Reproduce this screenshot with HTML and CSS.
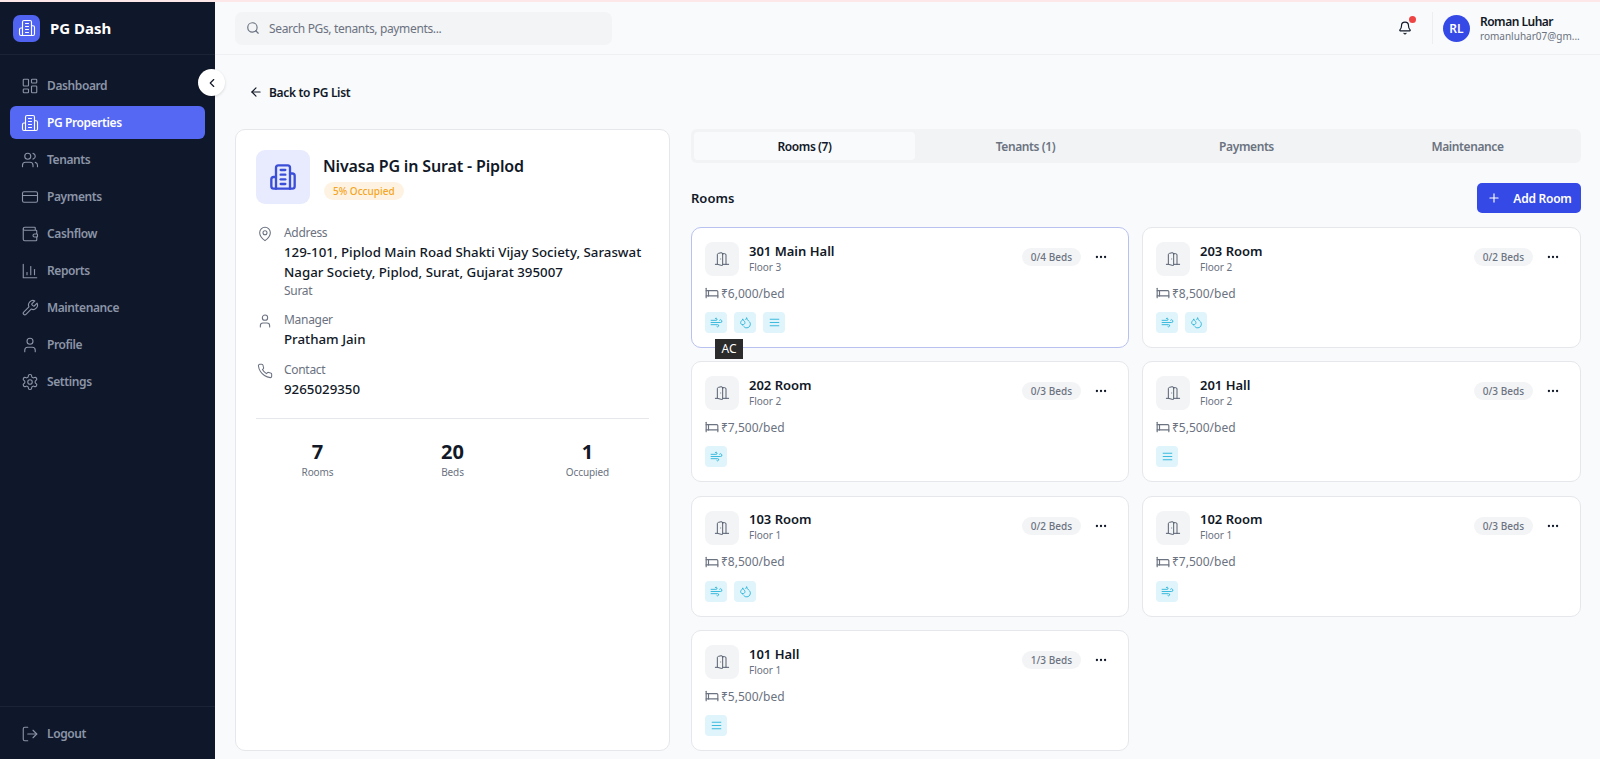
FILE: index.html
```html
<!DOCTYPE html>
<html lang="en">
<head>
    <meta charset="UTF-8">
    <meta name="viewport" content="width=device-width, initial-scale=1.0">
    <title>PG Dash</title>
    <link rel="stylesheet" href="styles.css">
</head>
<body>
    <svg class="sprite" xmlns="http://www.w3.org/2000/svg">
        <symbol id="i-building" viewBox="0 0 24 24"><path d="M6 22V4a2 2 0 0 1 2-2h8a2 2 0 0 1 2 2v18Z"/><path d="M6 12H4a2 2 0 0 0-2 2v6a2 2 0 0 0 2 2h2"/><path d="M18 9h2a2 2 0 0 1 2 2v9a2 2 0 0 1-2 2h-2"/><path d="M10 6h4"/><path d="M10 10h4"/><path d="M10 14h4"/><path d="M10 18h4"/></symbol>
        <symbol id="i-dashboard" viewBox="0 0 24 24"><rect x="3" y="3" width="7" height="9" rx="1"/><rect x="14" y="3" width="7" height="5" rx="1"/><rect x="14" y="12" width="7" height="9" rx="1"/><rect x="3" y="16" width="7" height="5" rx="1"/></symbol>
        <symbol id="i-users" viewBox="0 0 24 24"><path d="M16 21v-2a4 4 0 0 0-4-4H6a4 4 0 0 0-4 4v2"/><circle cx="9" cy="7" r="4"/><path d="M22 21v-2a4 4 0 0 0-3-3.87"/><path d="M16 3.13a4 4 0 0 1 0 7.75"/></symbol>
        <symbol id="i-card" viewBox="0 0 24 24"><rect x="2" y="5" width="20" height="14" rx="2"/><path d="M2 10h20"/></symbol>
        <symbol id="i-wallet" viewBox="0 0 24 24"><path d="M19 7V4a1 1 0 0 0-1-1H5a2 2 0 0 0 0 4h15a1 1 0 0 1 1 1v4h-3a2 2 0 0 0 0 4h3a1 1 0 0 0 1-1v-2a1 1 0 0 0-1-1"/><path d="M3 5v14a2 2 0 0 0 2 2h15a1 1 0 0 0 1-1v-4"/></symbol>
        <symbol id="i-chart" viewBox="0 0 24 24"><path d="M3 3v18h18"/><path d="M18 17v-7"/><path d="M13 17V6"/><path d="M8 17v-3"/></symbol>
        <symbol id="i-wrench" viewBox="0 0 24 24"><path d="M14.7 6.3a1 1 0 0 0 0 1.4l1.6 1.6a1 1 0 0 0 1.4 0l3.77-3.77a6 6 0 0 1-7.94 7.94l-6.91 6.91a2.12 2.12 0 0 1-3-3l6.91-6.91a6 6 0 0 1 7.94-7.94l-3.76 3.76z"/></symbol>
        <symbol id="i-user" viewBox="0 0 24 24"><path d="M19 21v-2a4 4 0 0 0-4-4H9a4 4 0 0 0-4 4v2"/><circle cx="12" cy="7" r="4"/></symbol>
        <symbol id="i-settings" viewBox="0 0 24 24"><path d="M12.22 2h-.44a2 2 0 0 0-2 2v.18a2 2 0 0 1-1 1.73l-.43.25a2 2 0 0 1-2 0l-.15-.08a2 2 0 0 0-2.73.73l-.22.38a2 2 0 0 0 .73 2.73l.15.1a2 2 0 0 1 1 1.72v.51a2 2 0 0 1-1 1.74l-.15.09a2 2 0 0 0-.73 2.73l.22.38a2 2 0 0 0 2.73.73l.15-.08a2 2 0 0 1 2 0l.43.25a2 2 0 0 1 1 1.73V20a2 2 0 0 0 2 2h.44a2 2 0 0 0 2-2v-.18a2 2 0 0 1 1-1.73l.43-.25a2 2 0 0 1 2 0l.15.08a2 2 0 0 0 2.73-.73l.22-.39a2 2 0 0 0-.73-2.73l-.15-.08a2 2 0 0 1-1-1.74v-.5a2 2 0 0 1 1-1.74l.15-.09a2 2 0 0 0 .73-2.73l-.22-.38a2 2 0 0 0-2.73-.73l-.15.08a2 2 0 0 1-2 0l-.43-.25a2 2 0 0 1-1-1.73V4a2 2 0 0 0-2-2z"/><circle cx="12" cy="12" r="3"/></symbol>
        <symbol id="i-logout" viewBox="0 0 24 24"><path d="M9 21H5a2 2 0 0 1-2-2V5a2 2 0 0 1 2-2h4"/><path d="m16 17 5-5-5-5"/><path d="M21 12H9"/></symbol>
        <symbol id="i-chevron" viewBox="0 0 24 24"><path d="m15 18-6-6 6-6"/></symbol>
        <symbol id="i-search" viewBox="0 0 24 24"><circle cx="11" cy="11" r="8"/><path d="m21 21-4.3-4.3"/></symbol>
        <symbol id="i-bell" viewBox="0 0 24 24"><path d="M10.268 21a2 2 0 0 0 3.464 0"/><path d="M3.262 15.326A1 1 0 0 0 4 17h16a1 1 0 0 0 .74-1.673C19.41 13.956 18 12.499 18 8A6 6 0 0 0 6 8c0 4.499-1.411 5.956-2.738 7.326"/></symbol>
        <symbol id="i-arrow" viewBox="0 0 24 24"><path d="m12 19-7-7 7-7"/><path d="M19 12H5"/></symbol>
        <symbol id="i-pin" viewBox="0 0 24 24"><path d="M20 10c0 6-8 12-8 12s-8-6-8-12a8 8 0 0 1 16 0Z"/><circle cx="12" cy="10" r="3"/></symbol>
        <symbol id="i-phone" viewBox="0 0 24 24"><path d="M22 16.92v3a2 2 0 0 1-2.18 2 19.79 19.79 0 0 1-8.63-3.07 19.5 19.5 0 0 1-6-6 19.79 19.79 0 0 1-3.07-8.67A2 2 0 0 1 4.11 2h3a2 2 0 0 1 2 1.72 12.84 12.84 0 0 0 .7 2.81 2 2 0 0 1-.45 2.11L8.09 9.91a16 16 0 0 0 6 6l1.27-1.27a2 2 0 0 1 2.11-.45 12.84 12.84 0 0 0 2.81.7A2 2 0 0 1 22 16.92z"/></symbol>
        <symbol id="i-plus" viewBox="0 0 24 24"><path d="M5 12h14"/><path d="M12 5v14"/></symbol>
        <symbol id="i-door" viewBox="0 0 24 24"><path d="M13 4h3a2 2 0 0 1 2 2v14"/><path d="M2 20h3"/><path d="M13 20h9"/><path d="M10 12v.01"/><path d="M13 4.562v16.157a1 1 0 0 1-1.242.97L5 20V5.562a2 2 0 0 1 1.515-1.94l4-1A2 2 0 0 1 13 4.561Z"/></symbol>
        <symbol id="i-dots" viewBox="0 0 24 24"><circle cx="12" cy="12" r="1"/><circle cx="19" cy="12" r="1"/><circle cx="5" cy="12" r="1"/></symbol>
        <symbol id="i-bed" viewBox="0 0 24 24"><path d="M2 4v16"/><path d="M2 8h18a2 2 0 0 1 2 2v10"/><path d="M2 17h20"/><path d="M6 8v9"/></symbol>
        <symbol id="i-wind" viewBox="0 0 24 24"><path d="M17.7 7.7a2.5 2.5 0 1 1 1.8 4.3H2"/><path d="M9.6 4.6A2 2 0 1 1 11 8H2"/><path d="M12.6 19.4A2 2 0 1 0 14 16H2"/></symbol>
        <symbol id="i-drops" viewBox="0 0 24 24"><path d="M7 16.3c2.2 0 4-1.83 4-4.05 0-1.16-.57-2.26-1.71-3.19S7.29 6.75 7 5.3c-.29 1.45-1.14 2.84-2.29 3.76S3 11.1 3 12.25c0 2.22 1.8 4.05 4 4.05z"/><path d="M12.56 6.6A10.97 10.97 0 0 0 14 3.02c.5 2.5 2 4.9 4 6.5s3 3.5 3 5.5a6.98 6.98 0 0 1-11.91 4.97"/></symbol>
        <symbol id="i-lines" viewBox="0 0 24 24"><path d="M4 6h16"/><path d="M4 12h16"/><path d="M4 18h16"/></symbol>
    </svg>

    <div class="top-strip"></div>
    <div class="app">
        <aside class="sidebar">
            <div class="brand">
                <span class="brand-logo"><svg class="ic ic-18"><use href="#i-building"/></svg></span>
                <span class="brand-name">PG Dash</span>
            </div>
            <button type="button" class="collapse-btn"><svg class="ic ic-14"><use href="#i-chevron"/></svg></button>
            <nav class="nav">
                <a class="nav-item"><svg class="ic ic-18"><use href="#i-dashboard"/></svg>Dashboard</a>
                <a class="nav-item active"><svg class="ic ic-18"><use href="#i-building"/></svg>PG Properties</a>
                <a class="nav-item"><svg class="ic ic-18"><use href="#i-users"/></svg>Tenants</a>
                <a class="nav-item"><svg class="ic ic-18"><use href="#i-card"/></svg>Payments</a>
                <a class="nav-item"><svg class="ic ic-18"><use href="#i-wallet"/></svg>Cashflow</a>
                <a class="nav-item"><svg class="ic ic-18"><use href="#i-chart"/></svg>Reports</a>
                <a class="nav-item"><svg class="ic ic-18"><use href="#i-wrench"/></svg>Maintenance</a>
                <a class="nav-item"><svg class="ic ic-18"><use href="#i-user"/></svg>Profile</a>
                <a class="nav-item"><svg class="ic ic-18"><use href="#i-settings"/></svg>Settings</a>
            </nav>
            <div class="sidebar-foot">
                <a class="nav-item"><svg class="ic ic-18"><use href="#i-logout"/></svg>Logout</a>
            </div>
        </aside>

        <div class="main">
            <header class="topbar">
                <div class="search">
                    <svg class="ic ic-14"><use href="#i-search"/></svg>
                    <span>Search PGs, tenants, payments...</span>
                </div>
                <div class="topbar-right">
                    <span class="bell"><svg class="ic ic-14"><use href="#i-bell"/></svg><i class="bell-dot"></i></span>
                    <div class="user">
                        <span class="avatar">RL</span>
                        <div class="user-text">
                            <div class="user-name">Roman Luhar</div>
                            <div class="user-mail">romanluhar07@gm...</div>
                        </div>
                    </div>
                </div>
            </header>

            <div class="content">
                <a class="back-link"><svg class="ic ic-14"><use href="#i-arrow"/></svg>Back to PG List</a>

                <div class="columns">
                    <section class="pg-card">
                        <div class="pg-head">
                            <span class="pg-icon"><svg class="ic ic-28"><use href="#i-building"/></svg></span>
                            <div>
                                <h2 class="pg-title">Nivasa PG in Surat - Piplod</h2>
                                <span class="occupied">5% Occupied</span>
                            </div>
                        </div>
                        <div class="info-row">
                            <svg class="ic ic-16"><use href="#i-pin"/></svg>
                            <div>
                                <div class="info-label">Address</div>
                                <div class="info-value">129-101, Piplod Main Road Shakti Vijay Society, Saraswat Nagar Society, Piplod, Surat, Gujarat 395007</div>
                                <div class="info-label info-sub">Surat</div>
                            </div>
                        </div>
                        <div class="info-row">
                            <svg class="ic ic-16"><use href="#i-user"/></svg>
                            <div>
                                <div class="info-label">Manager</div>
                                <div class="info-value">Pratham Jain</div>
                            </div>
                        </div>
                        <div class="info-row">
                            <svg class="ic ic-16"><use href="#i-phone"/></svg>
                            <div>
                                <div class="info-label">Contact</div>
                                <div class="info-value">9265029350</div>
                            </div>
                        </div>
                        <div class="stats">
                            <div><div class="stat-num">7</div><div class="stat-label">Rooms</div></div>
                            <div><div class="stat-num">20</div><div class="stat-label">Beds</div></div>
                            <div><div class="stat-num">1</div><div class="stat-label">Occupied</div></div>
                        </div>
                    </section>

                    <section class="rooms-col">
                        <div class="tabs">
                            <div class="tab active">Rooms (7)</div>
                            <div class="tab">Tenants (1)</div>
                            <div class="tab">Payments</div>
                            <div class="tab">Maintenance</div>
                        </div>
                        <div class="rooms-head">
                            <h3>Rooms</h3>
                            <button type="button" class="add-btn"><svg class="ic ic-14"><use href="#i-plus"/></svg>Add Room</button>
                        </div>
                        <div class="room-grid">
                            <article class="room focus">
                                <div class="room-top">
                                    <span class="room-icon"><svg class="ic ic-18"><use href="#i-door"/></svg></span>
                                    <div class="room-title"><div class="room-name">301 Main Hall</div><div class="room-floor">Floor 3</div></div>
                                    <span class="beds">0/4 Beds</span>
                                    <svg class="ic ic-14 dots"><use href="#i-dots"/></svg>
                                </div>
                                <div class="price"><svg class="ic ic-14"><use href="#i-bed"/></svg>₹6,000/bed</div>
                                <div class="amenities">
                                    <span class="chip"><svg class="ic ic-13"><use href="#i-wind"/></svg></span>
                                    <span class="chip"><svg class="ic ic-13"><use href="#i-drops"/></svg></span>
                                    <span class="chip"><svg class="ic ic-13"><use href="#i-lines"/></svg></span>
                                </div>
                                <span class="tooltip">AC</span>
                            </article>
                            <article class="room">
                                <div class="room-top">
                                    <span class="room-icon"><svg class="ic ic-18"><use href="#i-door"/></svg></span>
                                    <div class="room-title"><div class="room-name">203 Room</div><div class="room-floor">Floor 2</div></div>
                                    <span class="beds">0/2 Beds</span>
                                    <svg class="ic ic-14 dots"><use href="#i-dots"/></svg>
                                </div>
                                <div class="price"><svg class="ic ic-14"><use href="#i-bed"/></svg>₹8,500/bed</div>
                                <div class="amenities">
                                    <span class="chip"><svg class="ic ic-13"><use href="#i-wind"/></svg></span>
                                    <span class="chip"><svg class="ic ic-13"><use href="#i-drops"/></svg></span>
                                </div>
                            </article>
                            <article class="room">
                                <div class="room-top">
                                    <span class="room-icon"><svg class="ic ic-18"><use href="#i-door"/></svg></span>
                                    <div class="room-title"><div class="room-name">202 Room</div><div class="room-floor">Floor 2</div></div>
                                    <span class="beds">0/3 Beds</span>
                                    <svg class="ic ic-14 dots"><use href="#i-dots"/></svg>
                                </div>
                                <div class="price"><svg class="ic ic-14"><use href="#i-bed"/></svg>₹7,500/bed</div>
                                <div class="amenities">
                                    <span class="chip"><svg class="ic ic-13"><use href="#i-wind"/></svg></span>
                                </div>
                            </article>
                            <article class="room">
                                <div class="room-top">
                                    <span class="room-icon"><svg class="ic ic-18"><use href="#i-door"/></svg></span>
                                    <div class="room-title"><div class="room-name">201 Hall</div><div class="room-floor">Floor 2</div></div>
                                    <span class="beds">0/3 Beds</span>
                                    <svg class="ic ic-14 dots"><use href="#i-dots"/></svg>
                                </div>
                                <div class="price"><svg class="ic ic-14"><use href="#i-bed"/></svg>₹5,500/bed</div>
                                <div class="amenities">
                                    <span class="chip"><svg class="ic ic-13"><use href="#i-lines"/></svg></span>
                                </div>
                            </article>
                            <article class="room">
                                <div class="room-top">
                                    <span class="room-icon"><svg class="ic ic-18"><use href="#i-door"/></svg></span>
                                    <div class="room-title"><div class="room-name">103 Room</div><div class="room-floor">Floor 1</div></div>
                                    <span class="beds">0/2 Beds</span>
                                    <svg class="ic ic-14 dots"><use href="#i-dots"/></svg>
                                </div>
                                <div class="price"><svg class="ic ic-14"><use href="#i-bed"/></svg>₹8,500/bed</div>
                                <div class="amenities">
                                    <span class="chip"><svg class="ic ic-13"><use href="#i-wind"/></svg></span>
                                    <span class="chip"><svg class="ic ic-13"><use href="#i-drops"/></svg></span>
                                </div>
                            </article>
                            <article class="room">
                                <div class="room-top">
                                    <span class="room-icon"><svg class="ic ic-18"><use href="#i-door"/></svg></span>
                                    <div class="room-title"><div class="room-name">102 Room</div><div class="room-floor">Floor 1</div></div>
                                    <span class="beds">0/3 Beds</span>
                                    <svg class="ic ic-14 dots"><use href="#i-dots"/></svg>
                                </div>
                                <div class="price"><svg class="ic ic-14"><use href="#i-bed"/></svg>₹7,500/bed</div>
                                <div class="amenities">
                                    <span class="chip"><svg class="ic ic-13"><use href="#i-wind"/></svg></span>
                                </div>
                            </article>
                            <article class="room">
                                <div class="room-top">
                                    <span class="room-icon"><svg class="ic ic-18"><use href="#i-door"/></svg></span>
                                    <div class="room-title"><div class="room-name">101 Hall</div><div class="room-floor">Floor 1</div></div>
                                    <span class="beds">1/3 Beds</span>
                                    <svg class="ic ic-14 dots"><use href="#i-dots"/></svg>
                                </div>
                                <div class="price"><svg class="ic ic-14"><use href="#i-bed"/></svg>₹5,500/bed</div>
                                <div class="amenities">
                                    <span class="chip"><svg class="ic ic-13"><use href="#i-lines"/></svg></span>
                                </div>
                            </article>
                        </div>
                    </section>
                </div>
            </div>
        </div>
    </div>
</body>
</html>
```

FILE: styles.css
```css
* {
    box-sizing: border-box;
}
html, body {
    height: 100%;
}
body {
    margin: 0;
    overflow: hidden;
    font-family: "Noto Sans", Arial, sans-serif;
    background-color: #f8fafc;
    color: #111827;
}
h2, h3 {
    margin: 0;
}
button {
    font-family: inherit;
    border: none;
    cursor: pointer;
}
.sprite {
    display: none;
}
.ic {
    flex: none;
    display: block;
    fill: none;
    stroke: currentColor;
    stroke-width: 2;
    stroke-linecap: round;
    stroke-linejoin: round;
}
.ic-13 { width: 13px; height: 13px; stroke-width: 1.6; }
.ic-14 { width: 14px; height: 14px; }
.ic-16 { width: 16px; height: 16px; stroke-width: 1.6; }
.ic-18 { width: 18px; height: 18px; stroke-width: 1.5; }
.ic-28 { width: 28px; height: 28px; }

.top-strip {
    height: 2px;
    background-color: #fde7e9;
}
.app {
    display: flex;
    height: calc(100vh - 2px);
}

/* sidebar */
.sidebar {
    position: relative;
    flex: none;
    width: 215px;
    display: flex;
    flex-direction: column;
    background-color: #0f172a;
}
.brand {
    height: 53px;
    padding: 0 13px;
    display: flex;
    align-items: center;
    gap: 10px;
    border-bottom: 1px solid #1a2436;
}
.brand-logo {
    width: 27px;
    height: 27px;
    border-radius: 7px;
    display: flex;
    align-items: center;
    justify-content: center;
    background-color: #4f63f0;
    color: #fff;
}
.brand-name {
    font-size: 15px;
    font-weight: 700;
    color: #fff;
}
.collapse-btn {
    position: absolute;
    top: 67px;
    left: 198px;
    width: 27px;
    height: 27px;
    padding: 0;
    border-radius: 50%;
    display: flex;
    align-items: center;
    justify-content: center;
    background-color: #fff;
    color: #111827;
    box-shadow: 0 1px 3px rgba(0, 0, 0, 0.15);
}
.nav {
    flex: 1;
    padding: 14px 10px 0;
    display: flex;
    flex-direction: column;
    gap: 4px;
}
.nav-item {
    height: 33px;
    padding: 0 11px;
    display: flex;
    align-items: center;
    gap: 8px;
    border-radius: 6px;
    font-size: 12px;
    font-weight: 600;
    letter-spacing: -0.4px;
    color: #8b95a7;
}
.nav-item.active {
    background-color: #5468f4;
    color: #fff;
}
.sidebar-foot {
    height: 53px;
    padding: 10px 10px 0;
    border-top: 1px solid #1a2436;
}

/* top bar */
.main {
    flex: 1;
    min-width: 0;
}
.topbar {
    height: 53px;
    padding: 0 19px 0 20px;
    display: flex;
    align-items: center;
    justify-content: space-between;
    border-bottom: 1px solid #eef0f4;
}
.search {
    width: 377px;
    height: 33px;
    padding: 0 11px;
    display: flex;
    align-items: center;
    gap: 9px;
    border-radius: 7px;
    background-color: #f3f4f6;
    font-size: 12px;
    letter-spacing: -0.35px;
    color: #6b7280;
}
.topbar-right {
    display: flex;
    align-items: center;
}
.bell {
    position: relative;
    margin-right: 20px;
}
.bell-dot {
    position: absolute;
    top: -5px;
    right: -4px;
    width: 7px;
    height: 7px;
    border-radius: 50%;
    background-color: #ef4444;
}
.user {
    width: 149px;
    height: 32px;
    padding-left: 10px;
    display: flex;
    align-items: center;
    gap: 10px;
    border-left: 1px solid #eceef2;
}
.avatar {
    width: 27px;
    height: 27px;
    border-radius: 50%;
    display: flex;
    align-items: center;
    justify-content: center;
    background-color: #3449e6;
    color: #fff;
    font-size: 12px;
    font-weight: 600;
}
.user-name {
    font-size: 12px;
    font-weight: 600;
    letter-spacing: -0.5px;
    line-height: 16px;
}
.user-mail {
    font-size: 10px;
    line-height: 13px;
    color: #6b7280;
}

/* content */
.content {
    padding: 0 19px 0 20px;
}
.back-link {
    height: 74px;
    padding-left: 14px;
    display: flex;
    align-items: center;
    gap: 6px;
    font-size: 12px;
    font-weight: 600;
    letter-spacing: -0.35px;
}
.columns {
    display: grid;
    grid-template-columns: 435px 890px;
    gap: 21px;
}

/* left card */
.pg-card {
    padding: 20px;
    background-color: #fff;
    border: 1px solid #e5e7eb;
    border-radius: 10px;
}
.pg-head {
    display: flex;
    align-items: center;
    gap: 13px;
    margin-bottom: 20px;
}
.pg-icon {
    width: 54px;
    height: 54px;
    border-radius: 9px;
    display: flex;
    align-items: center;
    justify-content: center;
    background-color: #e8ebfd;
    color: #3b4ed8;
}
.pg-title {
    font-size: 16px;
    font-weight: 600;
    letter-spacing: -0.15px;
    line-height: 24px;
}
.occupied {
    display: inline-block;
    padding: 0 9px;
    margin-top: 1px;
    margin-left: 1px;
    border-radius: 9px;
    background-color: #fef3e2;
    color: #f5a524;
    font-size: 10px;
    font-weight: 500;
    line-height: 18px;
}
.info-row {
    display: flex;
    gap: 11px;
    margin-bottom: 12px;
    color: #6b7280;
}
.info-row .ic {
    margin: 2px 0 0 1px;
}
.info-label {
    font-size: 12px;
    letter-spacing: -0.3px;
    line-height: 18px;
    color: #6b7280;
}
.info-sub {
    line-height: 17px;
}
.info-value {
    font-size: 13.3px;
    font-weight: 500;
    line-height: 20px;
    color: #111827;
}
.stats {
    margin-top: 19px;
    padding-top: 20px;
    display: grid;
    grid-template-columns: repeat(3, 135px);
    justify-content: center;
    border-top: 1px solid #e5e7eb;
    text-align: center;
}
.stat-num {
    font-size: 20px;
    font-weight: 700;
    line-height: 26px;
}
.stat-label {
    font-size: 10px;
    letter-spacing: -0.1px;
    line-height: 14px;
    color: #6b7280;
}

/* right column */
.tabs {
    height: 34px;
    padding: 3px;
    display: grid;
    grid-template-columns: repeat(4, 1fr);
    border-radius: 6px;
    background-color: #f1f3f5;
}
.tab {
    display: flex;
    align-items: center;
    justify-content: center;
    border-radius: 4px;
    font-size: 12px;
    font-weight: 600;
    letter-spacing: -0.4px;
    color: #6b7280;
}
.tab.active {
    background-color: #f8fafc;
    color: #111827;
}
.rooms-head {
    margin-top: 20px;
    margin-bottom: 14px;
    height: 30px;
    display: flex;
    align-items: center;
    justify-content: space-between;
}
.rooms-head h3 {
    font-size: 13px;
    font-weight: 600;
}
.add-btn {
    width: 104px;
    height: 30px;
    padding-left: 7px;
    display: flex;
    align-items: center;
    justify-content: center;
    gap: 12px;
    border-radius: 5px;
    background-color: #3449e6;
    color: #fff;
    font-size: 12px;
    font-weight: 600;
    letter-spacing: -0.25px;
}
.room-grid {
    display: grid;
    grid-template-columns: 438px 439px;
    grid-auto-rows: 121px;
    column-gap: 13px;
    row-gap: 13.4px;
}
.room {
    position: relative;
    padding: 14px 13px;
    background-color: #fff;
    border: 1px solid #e5e7eb;
    border-radius: 10px;
}
.room.focus {
    border-color: #b9c1f0;
}
.room-top {
    display: flex;
    align-items: center;
}
.room-icon {
    width: 34px;
    height: 34px;
    border-radius: 8px;
    display: flex;
    align-items: center;
    justify-content: center;
    background-color: #f3f4f6;
    color: #566070;
}
.room-icon .ic {
    width: 16px;
    height: 16px;
}
.room-title {
    flex: 1;
    margin-left: 10px;
    padding-bottom: 1px;
}
.room-name {
    font-size: 13px;
    font-weight: 600;
    line-height: 17px;
}
.room-floor {
    font-size: 10px;
    line-height: 15px;
    color: #6b7280;
}
.beds {
    padding: 0 9px;
    margin-right: 13px;
    margin-bottom: 4px;
    border-radius: 9px;
    background-color: #f3f4f6;
    color: #6b7280;
    font-size: 10px;
    font-weight: 500;
    line-height: 18px;
}
.dots {
    margin-right: 7px;
    margin-bottom: 4px;
}
.price {
    margin-top: 8px;
    height: 18px;
    display: flex;
    align-items: center;
    gap: 2px;
    font-size: 12px;
    color: #6b7280;
}
.amenities {
    margin-top: 10px;
    display: flex;
    gap: 7px;
}
.chip {
    width: 22px;
    height: 21px;
    border-radius: 4px;
    display: flex;
    align-items: center;
    justify-content: center;
    background-color: #e0f4fb;
    color: #22b1d8;
}
.tooltip {
    position: absolute;
    top: 111px;
    left: 23px;
    z-index: 2;
    width: 28px;
    height: 20px;
    background-color: #2b2b2b;
    color: #fff;
    font-size: 12px;
    line-height: 20px;
    text-align: center;
}
```
